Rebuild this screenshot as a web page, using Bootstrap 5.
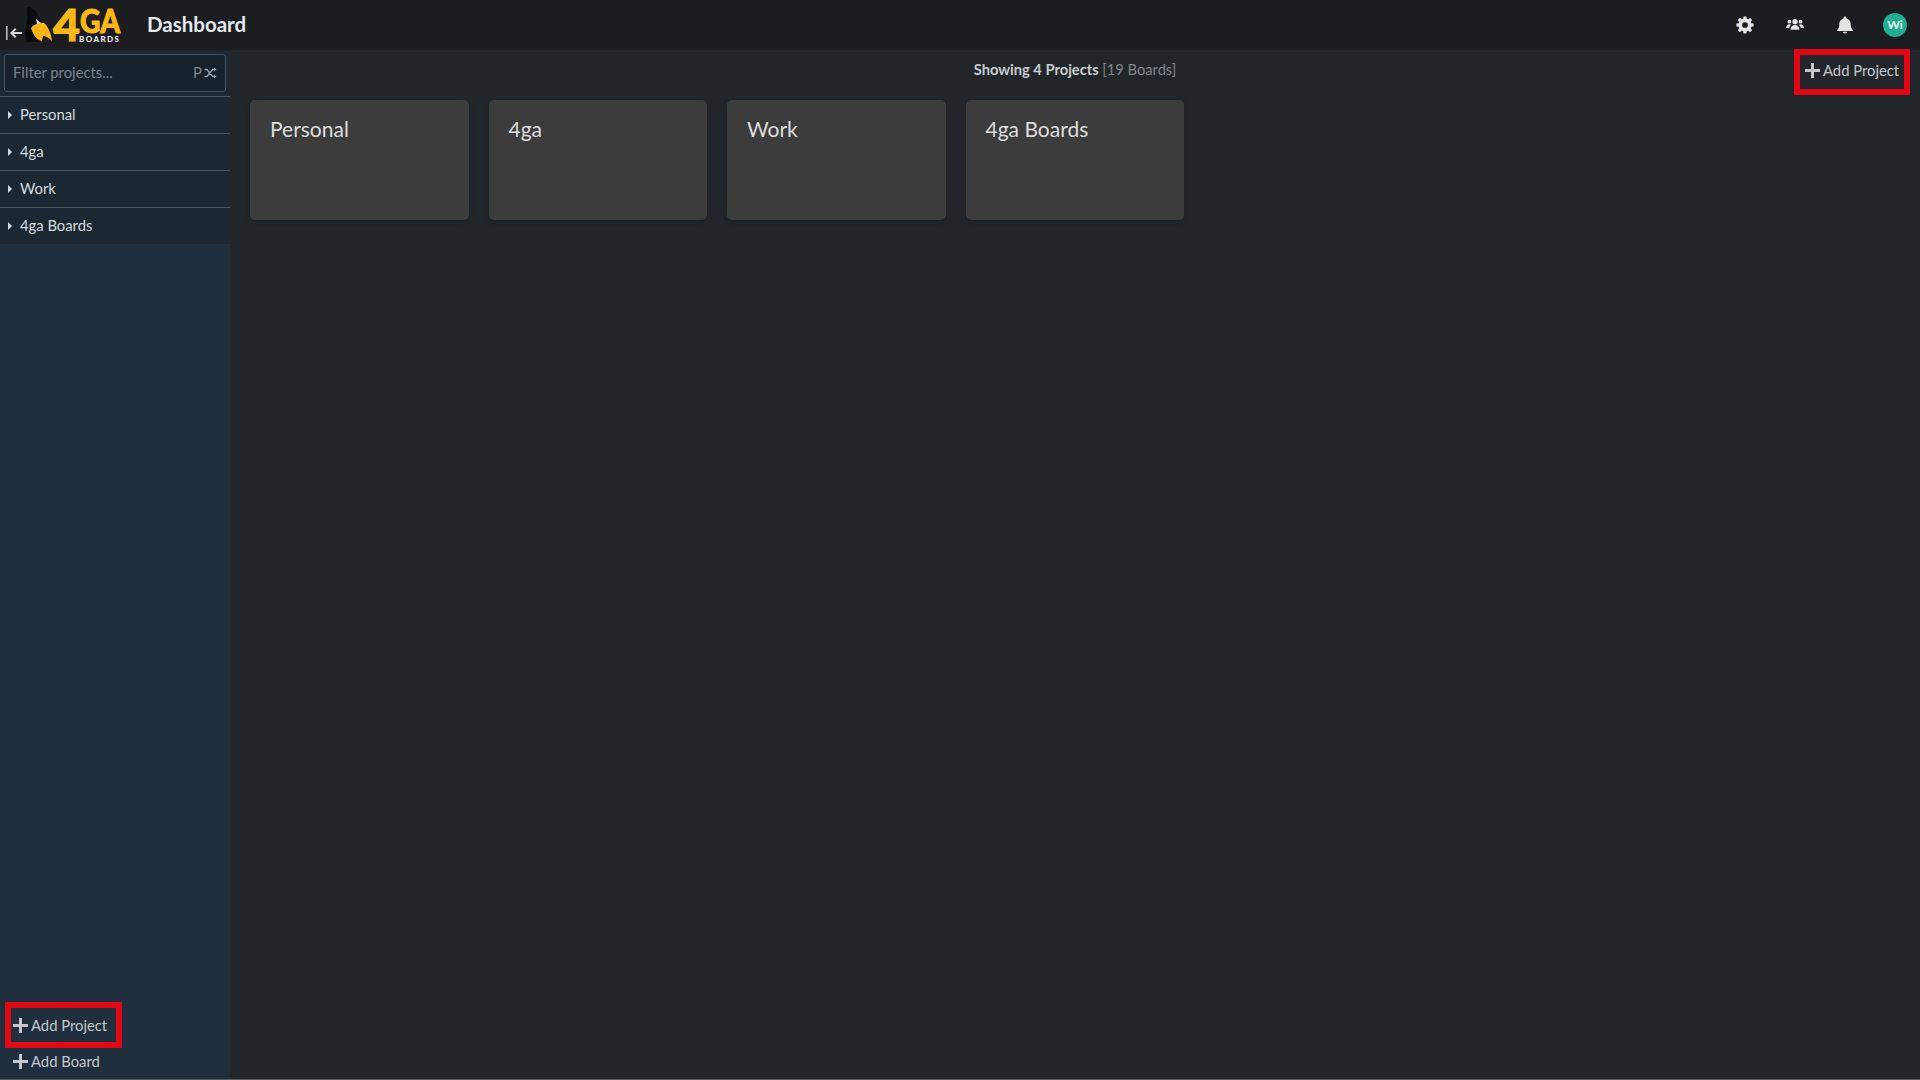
<!DOCTYPE html>
<html lang="en">
<head>
    <meta charset="UTF-8">
    <meta name="viewport" content="width=device-width, initial-scale=1.0">
    <title>Dashboard</title>
    <link href="https://cdn.jsdelivr.net/npm/bootstrap@5.3.0/dist/css/bootstrap.min.css" rel="stylesheet">
    <style>
        body {
            height: 1080px;
            overflow: hidden;
            background: #22262b;
            font-family: "Lato", "Open Sans", sans-serif;
            color: #d6d6d6;
        }
        .top-bar {
            height: 50px;
            background: #1b1d21;
        }
        .collapse-btn {
            margin: 16px 0 0 6px;
            width: 16px;
            height: 14px;
            flex-shrink: 0;
        }
        .logo-box {
            width: 100px;
            height: 50px;
            margin-left: 2px;
            flex-shrink: 0;
            overflow: visible;
        }
        .logo-word {
            font-family: "Lato", sans-serif;
            font-weight: 900;
            fill: #fdb813;
            stroke: #fdb813;
            stroke-width: 1;
        }
        .logo-sub {
            font-family: "Lato", sans-serif;
            font-weight: 900;
            fill: #e8e8e8;
        }
        .page-title {
            margin: 0 0 2px 23px;
            font-size: 20.5px;
            font-weight: 700;
            color: #e6e9ee;
        }
        .top-icon {
            width: 20px;
            height: 20px;
            margin-right: 30px;
            fill: #e4e4e4;
        }
        .top-icon.last-icon {
            margin-right: 28px;
        }
        .avatar {
            width: 24px;
            height: 24px;
            margin-right: 13px;
            border-radius: 50%;
            background: #1fae8f;
            color: #eafff8;
            font-size: 12px;
            font-weight: 700;
        }
        .page-body {
            height: 1029px;
        }
        .page-edge {
            height: 1px;
            background: #5a5f63;
        }
        .side-bar {
            width: 230px;
            background: #1f2f3e;
        }
        .side-top {
            background: #1b2834;
        }
        .filter-wrap {
            padding: 4px 4px;
            height: 46px;
        }
        .filter-box {
            height: 38px;
            padding: 0 8px 1px;
            background: #16212b;
            border: 1px solid #47525c;
            border-radius: 3px;
            font-size: 14.8px;
            color: #7d858c;
        }
        .filter-box svg {
            margin-left: 2px;
        }
        .project-row {
            height: 37px;
            padding: 0 0 1px 8px;
            border-top: 1px solid #4b5763;
            font-size: 14.8px;
            color: #d8dcdf;
        }
        .caret-mark {
            width: 0;
            height: 0;
            margin-right: 8px;
            border-left: 4px solid #d8dcdf;
            border-top: 4px solid transparent;
            border-bottom: 4px solid transparent;
        }
        .add-btn {
            font-size: 14.8px;
            color: #c4c8cc;
            line-height: 1;
        }
        .add-btn svg {
            width: 15px;
            height: 15px;
            margin-right: 3px;
            fill: currentColor;
        }
        .red-frame {
            border: 6px solid #e30613;
        }
        .side-add-project {
            width: 117px;
            height: 46px;
            margin-left: 5px;
            padding-left: 2px;
        }
        .side-add-board {
            height: 31px;
            padding: 0 0 4px 13px;
        }
        .main-area {
            min-width: 0;
        }
        .main-head {
            height: 50px;
        }
        .count-text {
            font-size: 14.7px;
            font-weight: 700;
            color: #c8cbce;
            padding-bottom: 11px;
        }
        .count-text span {
            font-weight: 400;
            color: #80858a;
        }
        .main-add-project {
            top: -1px;
            right: 10px;
            width: 116px;
            height: 46px;
            padding: 0 0 4px 5px;
        }
        .project-grid {
            padding-left: 20px;
            gap: 20px;
        }
        .project-tile {
            width: 218.5px;
            height: 120px;
            padding: 16px 20px;
            background: #3c3c3c;
            border-radius: 5px;
            box-shadow: 0 2px 5px rgba(0, 0, 0, .2);
            font-size: 21px;
            line-height: 1.2;
            color: #dedede;
        }
    </style>
</head>
<body>

    <!-- Top bar -->
    <div class="top-bar d-flex align-items-center">
        <svg class="collapse-btn" viewBox="0 0 16 14">
            <path d="M0 0h1.600v14H0z" fill="#bdbdbd"/>
            <path d="M4 7l5-5 1.400 1.400L7.800 6H16v2H7.800l2.600 2.600L9 12z" fill="#d5d5d5"/>
        </svg>
        <svg class="logo-box" viewBox="24 0 100 50">
            <path d="M28 7C32 7 38 12 40 20L44 24 36 30 38 42H27C24 36 26 28 27 22 28 16 26 11 28 7z" fill="#0a0a0a"/>
            <path d="M31 28C34 24 40 22 44 23 48 26 51 33 52 41 48 37 45 36 43 36L42 41C37 40 33 35 31 28z" fill="#fbb414"/>
            <path d="M36 19l5 4-4 1z" fill="#eee"/>
            <text class="logo-word" x="53" y="41" font-size="44" textLength="27" lengthAdjust="spacingAndGlyphs">4</text>
            <text class="logo-word" x="80" y="33" font-size="33" textLength="40" lengthAdjust="spacingAndGlyphs">GA</text>
            <text class="logo-sub" x="79" y="41.500" font-size="8" textLength="40">BOARDS</text>
        </svg>
        <div class="page-title">Dashboard</div>

        <div class="ms-auto d-flex align-items-center">
            <svg class="top-icon" viewBox="-2 -2 28 28">
                <path fill-rule="evenodd" d="M10 0h4l.6 3.200 1.900.8 2.700-1.900 2.800 2.800-1.900 2.700.8 1.900L24 10v4l-3.100.6-.8 1.900 1.900 2.700-2.800 2.800-2.700-1.900-1.900.8L14 24h-4l-.6-3.100-1.900-.8-2.700 1.900L2 19.200l1.900-2.700-.8-1.900L0 14v-4l3.100-.6.8-1.900L2 4.800 4.800 2l2.700 1.900 1.900-.8zM12 8a4 4 0 1 0 0 8 4 4 0 0 0 0-8z"/>
            </svg>
            <svg class="top-icon" viewBox="-1.500 -3 27 27">
                <circle cx="12" cy="6" r="3.600"/>
                <circle cx="4.500" cy="6" r="2.600"/>
                <circle cx="19.500" cy="6" r="2.600"/>
                <path d="M6 17c0-4 2.500-6.500 6-6.500s6 2.500 6 6.500z"/>
                <path d="M0 14.500C0 11.500 1.800 9.500 4.500 9.500c1 0 1.800.3 2.400.8C5.300 11.500 4.500 13 4.300 14.500z"/>
                <path d="M24 14.500c0-3-1.800-5-4.500-5-1 0-1.800.3-2.400.8 1.600 1.200 2.400 2.700 2.600 4.200z"/>
            </svg>
            <svg class="top-icon last-icon" viewBox="-2 0 28 24">
                <path d="M12 0a2 2 0 0 1 2 2v1c3.700.8 6 3.800 6 7.500 0 4.500 1 6.500 3 8.500v1.500H1V19c2-2 3-4 3-8.500C4 6.800 6.300 3.800 10 3V2a2 2 0 0 1 2-2z"/>
                <path d="M9 21.500h6a3 2.500 0 0 1-6 0z"/>
            </svg>
            <div class="avatar d-flex align-items-center justify-content-center">Wi</div>
        </div>
    </div>

    <div class="page-body d-flex">
        <!-- Sidebar -->
        <div class="side-bar d-flex flex-column flex-shrink-0">
            <div class="side-top">
                <div class="filter-wrap">
                    <div class="filter-box d-flex align-items-center justify-content-between">
                        <span>Filter projects...</span>
                        <span class="d-flex align-items-center">P<svg width="13" height="12" viewBox="0 0 12 12"><path d="M0 2.500h2.500L8 9.500h2M0 9.500h2.500L8 2.500h2" fill="none" stroke="#9aa0a5" stroke-width="1.300"/><path d="M9.500 0.500l2.500 2-2.500 2zM9.500 7.500l2.500 2-2.500 2z" fill="#9aa0a5"/></svg></span>
                    </div>
                </div>
                <div class="project-row d-flex align-items-center"><i class="caret-mark"></i>Personal</div>
                <div class="project-row d-flex align-items-center"><i class="caret-mark"></i>4ga</div>
                <div class="project-row d-flex align-items-center"><i class="caret-mark"></i>Work</div>
                <div class="project-row d-flex align-items-center"><i class="caret-mark"></i>4ga Boards</div>
            </div>
            <div class="mt-auto">
                <div class="add-btn red-frame side-add-project d-flex align-items-center">
                    <svg viewBox="0 0 15 15"><path d="M6 0h3v6h6v3H9v6H6V9H0V6h6z"/></svg>Add Project
                </div>
                <div class="add-btn side-add-board d-flex align-items-center">
                    <svg viewBox="0 0 15 15"><path d="M6 0h3v6h6v3H9v6H6V9H0V6h6z"/></svg>Add Board
                </div>
            </div>
        </div>

        <!-- Main -->
        <div class="main-area flex-grow-1">
            <div class="main-head position-relative d-flex align-items-center justify-content-center">
                <div class="count-text">Showing 4 Projects <span>[19 Boards]</span></div>
                <div class="add-btn red-frame main-add-project position-absolute d-flex align-items-center">
                    <svg viewBox="0 0 15 15"><path d="M6 0h3v6h6v3H9v6H6V9H0V6h6z"/></svg>Add Project
                </div>
            </div>
            <div class="project-grid d-flex">
                <div class="project-tile">Personal</div>
                <div class="project-tile">4ga</div>
                <div class="project-tile">Work</div>
                <div class="project-tile">4ga Boards</div>
            </div>
        </div>
    </div>
    <div class="page-edge"></div>

    <script src="https://cdn.jsdelivr.net/npm/bootstrap@5.3.0/dist/js/bootstrap.bundle.min.js"></script>
</body>
</html>
